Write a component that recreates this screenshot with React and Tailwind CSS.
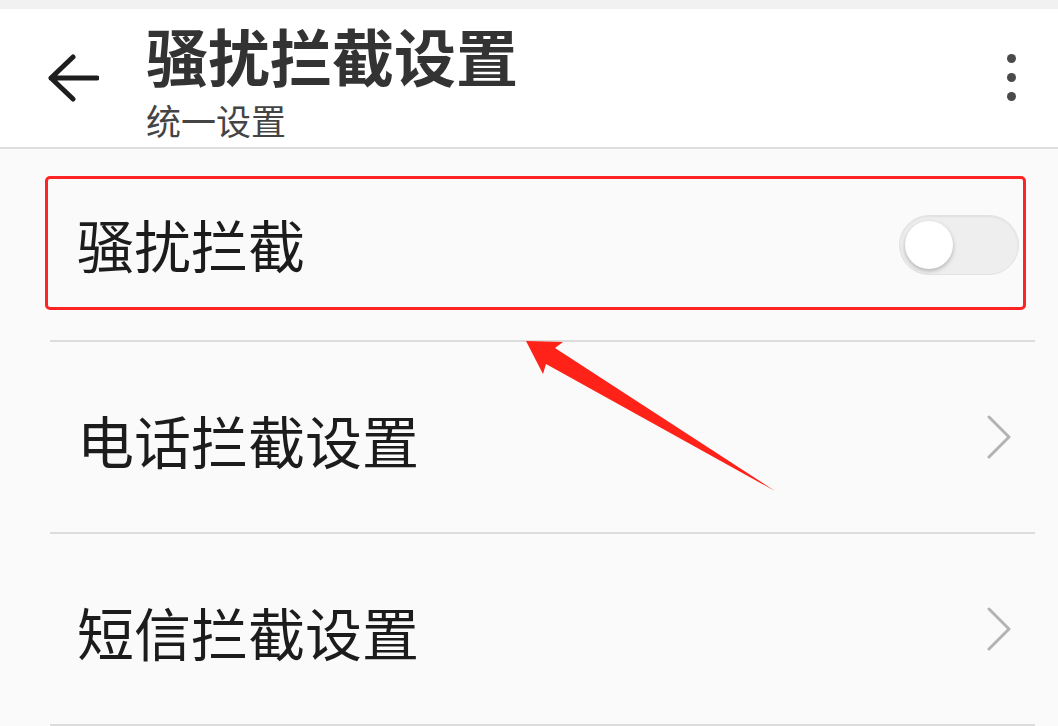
import React from "react";

const font = { fontFamily: '"Noto Sans CJK SC", "Noto Sans", sans-serif' };

function Chevron() {
  return (
    <svg width="26" height="44" viewBox="0 0 26 44" className="shrink-0">
      <polyline points="3,2 23,22 3,42" fill="none" stroke="#b3b3b3" strokeWidth="3" strokeLinecap="round" strokeLinejoin="round" />
    </svg>
  );
}

function Divider() {
  return <div className="ml-[50px] w-[985px] h-[2px] bg-[#dcdcdc]" />;
}

export default function App() {
  return (
    <div className="relative w-[1058px] h-[726px] overflow-hidden bg-[#fafafa]" style={font}>
      <div className="h-[9px] bg-[#f1f1f1]" />
      <header className="h-[140px] bg-white border-b-2 border-[#dedede] flex items-start">
        <div className="w-[146px] shrink-0 pt-[45px] pl-[47px]">
          <svg width="52" height="48" viewBox="0 0 52 48">
            <path d="M50 24H4M26 3L4 24l22 21" fill="none" stroke="#1e1e1e" strokeWidth="5" strokeLinecap="round" strokeLinejoin="round" />
          </svg>
        </div>
        <div className="flex-1 pt-[11px]">
          <div className="text-[62px] leading-[70px] font-bold text-[#333333]">骚扰拦截设置</div>
          <div className="text-[35px] leading-[40px] text-[#444444] mt-[10px]">统一设置</div>
        </div>
        <div className="w-[60px] pt-[45px] flex flex-col items-center gap-[10px] mr-[17px]">
          <span className="block w-[9px] h-[9px] rounded-full bg-[#4a4a4a]" />
          <span className="block w-[9px] h-[9px] rounded-full bg-[#4a4a4a]" />
          <span className="block w-[9px] h-[9px] rounded-full bg-[#4a4a4a]" />
        </div>
      </header>

      <div className="h-[191px] pt-[27px]">
        <div className="ml-[45px] w-[981px] h-[134px] border-[3px] border-[#ff2424] rounded-[5px] flex items-center justify-between pl-[29px] pr-[4px]">
          <span className="text-[57px] leading-none text-[#1c1c1c]">骚扰拦截</span>
          <div className="relative w-[120px] h-[60px] mt-[3px] rounded-full bg-[#eeeeee] border border-[#e2e2e2] shadow-[inset_0_1px_2px_rgba(0,0,0,0.06)]">
            <div className="absolute left-[5px] top-[5px] w-[48px] h-[48px] rounded-full bg-white shadow-[0_2px_4px_rgba(0,0,0,0.25)]" />
          </div>
        </div>
      </div>
      <Divider />

      <div className="h-[190px] flex items-center justify-between pl-[77px] pr-[46px]">
        <span className="text-[57px] leading-none text-[#1c1c1c] pt-[4px]">电话拦截设置</span>
        <Chevron />
      </div>
      <Divider />

      <div className="h-[190px] flex items-center justify-between pl-[77px] pr-[46px]">
        <span className="text-[57px] leading-none text-[#1c1c1c] pt-[4px]">短信拦截设置</span>
        <Chevron />
      </div>
      <Divider />

      <svg className="absolute left-0 top-0 pointer-events-none" width="1058" height="726" viewBox="0 0 1058 726">
        <polygon points="526,341 563,342 555,348 775,491 546,364 543,374" fill="#ff2218" />
      </svg>
    </div>
  );
}
